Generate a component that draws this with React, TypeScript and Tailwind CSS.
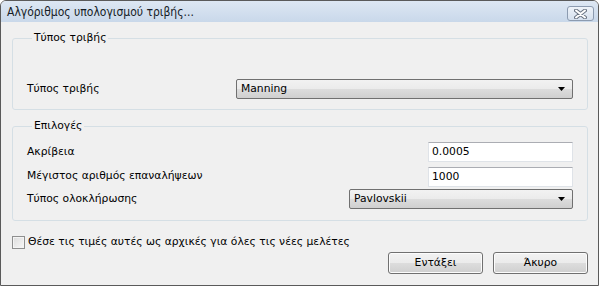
import React from 'react';

const font = "font-['DejaVu_Sans',sans-serif]";

function Combo({ value, width }: { value: string; width: string }) {
  return (
    <div
      className={`${width} h-[20px] flex items-center justify-between pl-[4px] pr-[6px] rounded-[2px] border border-[#707070] bg-[linear-gradient(#f2f2f2_0%,#ebebeb_50%,#dddddd_50%,#cfcfcf_100%)] text-black`}
    >
      <span>{value}</span>
      <svg width="8" height="5" viewBox="0 0 8 5">
        <path d="M0 0H7L3.5 4Z" fill="#000" />
      </svg>
    </div>
  );
}

function TextBox({ value }: { value: string }) {
  return (
    <div className="w-[145px] h-[20px] flex items-center pl-[3px] bg-white border border-[#dfe3e8] border-t-[#abadb3]">
      {value}
    </div>
  );
}

function Button({ label }: { label: string }) {
  return (
    <button className="w-[95px] h-[22px] rounded-[3px] border border-[#707070] bg-[linear-gradient(#f2f2f2_0%,#ebebeb_50%,#dddddd_50%,#cfcfcf_100%)] text-black shadow-[inset_0_0_0_1px_#fcfcfc]">
      {label}
    </button>
  );
}

export default function App() {
  return (
    <div className={`w-[599px] h-[286px] flex flex-col border border-[#5a5a5a] bg-[#f0f0f0] rounded-t-[6px] overflow-hidden text-[10.75px] leading-[14px] text-black ${font}`}>
      {/* title bar */}
      <div className="h-[21px] flex items-center justify-between pl-[6px] pr-[4px] bg-[linear-gradient(#dde7f3,#c9d8ea)]">
        <span className="text-[12px] font-stretch-condensed text-[#151c26]">Αλγόριθμος υπολογισμού τριβής...</span>
        <div className="w-[27px] h-[15px] mt-[4px] flex items-center justify-center rounded-[3px] border border-[#8c9bb0] bg-[linear-gradient(#eef3f9,#d5e0ee)]">
          <svg width="13" height="10" viewBox="0 0 13 10">
            <path d="M2 1.5L11 8.5M11 1.5L2 8.5" stroke="#6b7584" strokeWidth="4" strokeLinecap="round" />
            <path d="M2 1.5L11 8.5M11 1.5L2 8.5" stroke="#ffffff" strokeWidth="2" strokeLinecap="round" />
          </svg>
        </div>
      </div>

      <div className="flex flex-col pl-[11px] pr-[10px]">
        <fieldset className="mt-[9px] border border-[#d5dfe5] rounded-[3px] px-[14px] pt-[34px] pb-[10px]">
          <legend className="ml-[5px] px-[2px]">Τύπος τριβής</legend>
          <div className="flex items-center justify-between">
            <span>Τύπος τριβής</span>
            <Combo value="Manning" width="w-[337px]" />
          </div>
        </fieldset>

        <fieldset className="mt-[9px] border border-[#d5dfe5] rounded-[3px] px-[14px] pt-[9px] pb-[11px]">
          <legend className="ml-[5px] px-[2px]">Επιλογές</legend>
          <div className="flex flex-col">
            <div className="flex items-center justify-between">
              <span>Ακρίβεια</span>
              <TextBox value="0.0005" />
            </div>
            <div className="mt-[5px] flex items-center justify-between">
              <span className="-mt-[3px]">Μέγιστος αριθμός επαναλήψεων</span>
              <TextBox value="1000" />
            </div>
            <div className="mt-[2px] flex items-center justify-between">
              <span>Τύπος ολοκλήρωσης</span>
              <Combo value="Pavlovskii" width="w-[224px]" />
            </div>
          </div>
        </fieldset>

        <label className="mt-[14px] flex items-center gap-[3px]">
          <span className="w-[13px] h-[13px] border border-[#8e8f8f] bg-[linear-gradient(135deg,#dcdcdc,#f8f8f8)] shadow-[inset_0_0_0_1px_#f4f4f4]" />
          <span>Θέσε τις τιμές αυτές ως αρχικές για όλες τις νέες μελέτες</span>
        </label>

        <div className="mt-[3px] flex justify-end gap-[10px]">
          <Button label="Εντάξει" />
          <Button label="Άκυρο" />
        </div>
      </div>
    </div>
  );
}
